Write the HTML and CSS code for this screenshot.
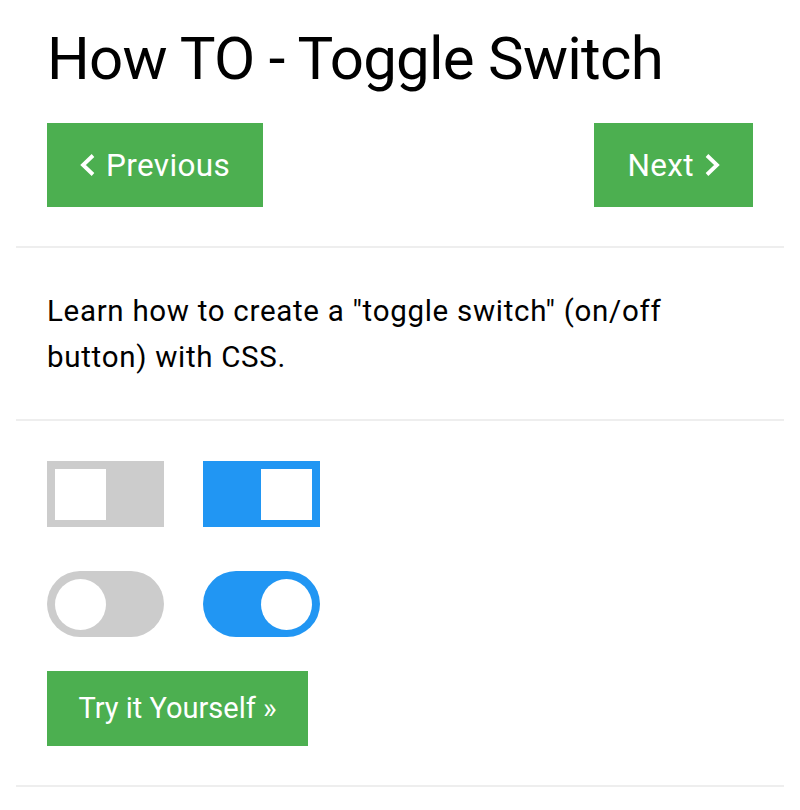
FILE: index.html
```html
<!DOCTYPE html>
<html lang="en">
<head>
<meta charset="utf-8">
<title>How TO - Toggle Switch</title>
<link rel="stylesheet" href="styles.css">
</head>
<body>
<div class="page">
  <div class="content">
    <h1 class="title">How TO - Toggle Switch</h1>
    <div class="nav">
      <a class="btn nav-btn" href="#"><svg class="chev" viewBox="0 0 15 22" width="15" height="22" aria-hidden="true"><polyline points="13,1.5 3,11 13,20.5" fill="none" stroke="#fff" stroke-width="3.8"/></svg><span>Previous</span></a>
      <a class="btn nav-btn" href="#"><span>Next</span><svg class="chev" viewBox="0 0 15 22" width="15" height="22" aria-hidden="true"><polyline points="2,1.5 12,11 2,20.5" fill="none" stroke="#fff" stroke-width="3.8"/></svg></a>
    </div>
  </div>
  <hr class="rule">
  <div class="content">
    <p class="intro">Learn how to create a "toggle switch" (on/off button) with CSS.</p>
  </div>
  <hr class="rule">
  <div class="content">
    <div class="switches">
      <span class="switch square"><span class="knob"></span></span>
      <span class="switch square on"><span class="knob"></span></span>
      <span class="switch round"><span class="knob"></span></span>
      <span class="switch round on"><span class="knob"></span></span>
    </div>
    <a class="btn try-btn" href="#">Try it Yourself &raquo;</a>
  </div>
  <hr class="rule">
</div>
</body>
</html>
```
FILE: styles.css
```css
html, body {
  margin: 0;
  padding: 0;
  background: #fff;
}
body {
  font-family: Roboto, "Liberation Sans", sans-serif;
  color: #000;
}
.page {
  padding: 0 16px;
}
.content {
  padding: 0 31px;
}
.title {
  margin: 0;
  padding-top: 24px;
  font-size: 60px;
  font-weight: 400;
  line-height: 70px;
  letter-spacing: -0.75px;
}
.nav {
  display: flex;
  justify-content: space-between;
  margin-top: 29px;
}
.btn {
  display: inline-block;
  background: #4CAF50;
  color: #fff;
  text-decoration: none;
}
.nav-btn {
  display: flex;
  align-items: center;
  gap: 11px;
  height: 84px;
  padding: 0 33px;
  box-sizing: border-box;
  font-size: 31.5px;
  letter-spacing: 0.35px;
}
.chev {
  display: block;
  flex: none;
}
.rule {
  margin: 39px 0 0;
  border: 0;
  height: 2px;
  background: #eee;
}
.intro {
  margin: 40px 0 0;
  font-size: 29.5px;
  letter-spacing: 0.7px;
  line-height: 46px;
}
.switches {
  margin-top: 40px;
  display: grid;
  grid-template-columns: 117px 117px;
  column-gap: 39px;
  row-gap: 44px;
}
.switch {
  display: block;
  position: relative;
  width: 117px;
  height: 66px;
  background: #ccc;
}
.switch.on {
  background: #2196F3;
}
.knob {
  position: absolute;
  left: 8px;
  top: 8px;
  width: 51px;
  height: 51px;
  background: #fff;
}
.switch.on .knob {
  left: 58px;
}
.switch.round {
  border-radius: 33px;
}
.switch.round .knob {
  border-radius: 50%;
}
.try-btn {
  margin-top: 34px;
  padding: 15px 31.5px;
  font-size: 29px;
  line-height: 45px;
}
```
